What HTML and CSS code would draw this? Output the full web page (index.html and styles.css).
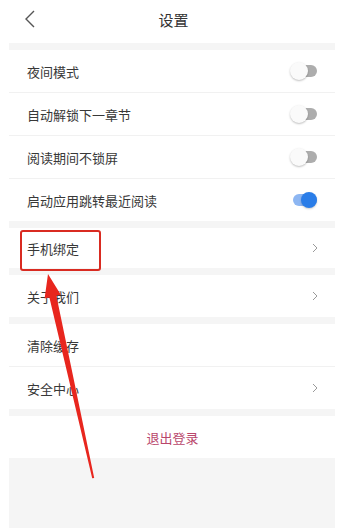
FILE: index.html
```html
<!DOCTYPE html>
<html lang="zh">
<head>
<meta charset="utf-8">
<link rel="stylesheet" href="styles.css">
</head>
<body>
<header class="topbar">
  <span class="back">
    <svg width="12" height="18" viewBox="0 0 12 18"><polyline points="10,1 2,9 10,17" fill="none" stroke="#555" stroke-width="1.4"/></svg>
  </span>
  <h1 class="title">设置</h1>
  <span></span>
</header>
<main class="content">
  <section class="group">
    <div class="row"><span class="label">夜间模式</span><span class="switch"><span class="track"></span><span class="knob"></span></span></div>
    <div class="row"><span class="label">自动解锁下一章节</span><span class="switch"><span class="track"></span><span class="knob"></span></span></div>
    <div class="row"><span class="label">阅读期间不锁屏</span><span class="switch"><span class="track"></span><span class="knob"></span></span></div>
    <div class="row"><span class="label">启动应用跳转最近阅读</span><span class="switch on"><span class="track"></span><span class="knob"></span></span></div>
  </section>
  <section class="group">
    <div class="row short"><span class="label">手机绑定</span><span class="chev"><svg width="6" height="10" viewBox="0 0 6 10"><polyline points="1,1 5,5 1,9" fill="none" stroke="#9a9a9a" stroke-width="1"/></svg></span></div>
  </section>
  <section class="group">
    <div class="row"><span class="label">关于我们</span><span class="chev"><svg width="6" height="10" viewBox="0 0 6 10"><polyline points="1,1 5,5 1,9" fill="none" stroke="#9a9a9a" stroke-width="1"/></svg></span></div>
  </section>
  <section class="group">
    <div class="row"><span class="label">清除缓存</span></div>
    <div class="row"><span class="label">安全中心</span><span class="chev"><svg width="6" height="10" viewBox="0 0 6 10"><polyline points="1,1 5,5 1,9" fill="none" stroke="#9a9a9a" stroke-width="1"/></svg></span></div>
  </section>
  <section class="group">
    <div class="row logout">退出登录</div>
  </section>
</main>
<div class="highlight"></div>
<svg class="arrow" width="347" height="528" viewBox="0 0 347 528">
  <polygon points="48,274 60.8,294.8 56.4,295.8 94.2,478 92.2,478.3 49.4,297.4 44.6,298.4" fill="#e8261e"/>
</svg>
</body>
</html>
```

FILE: styles.css
```css
html, body {
  margin: 0;
  padding: 0;
  background: #ffffff;
}
body {
  position: relative;
  width: 347px;
  height: 528px;
  overflow: hidden;
  font-family: "Noto Sans CJK SC", "Noto Sans", sans-serif;
  color: #333333;
}
.topbar {
  height: 43px;
  display: grid;
  grid-template-columns: 1fr auto 1fr;
  align-items: center;
  background: #ffffff;
}
.back {
  display: flex;
  align-items: center;
  padding-left: 24px;
  padding-bottom: 5px;
}
.title {
  margin: 0;
  font-size: 15px;
  font-weight: 400;
  color: #333333;
  padding-bottom: 5px;
}
.content {
  margin: 0 12px 0 9px;
  background: #f5f5f5;
  padding-top: 7px;
  height: 485px;
  box-sizing: border-box;
  display: flex;
  flex-direction: column;
  gap: 7px;
}
.group {
  background: #ffffff;
}
.row {
  height: 42px;
  display: flex;
  align-items: center;
  justify-content: space-between;
  padding: 0 17px 0 18px;
  font-size: 13px;
  color: #383838;
}
.row + .row {
  border-top: 1px solid #f1f1f1;
}
.row.short {
  height: 40px;
}
.switch {
  position: relative;
  width: 28px;
  height: 18px;
}
.track {
  position: absolute;
  left: 3px;
  top: 3px;
  width: 24px;
  height: 12px;
  border-radius: 6px;
  background: #adadad;
}
.knob {
  position: absolute;
  left: 0;
  top: 0;
  width: 18px;
  height: 18px;
  border-radius: 50%;
  background: #fafafa;
  box-shadow: 0 1px 2px rgba(0,0,0,0.25);
}
.switch.on .track {
  background: #8db6f2;
}
.switch.on .knob {
  left: 11px;
  top: 1px;
  width: 16px;
  height: 16px;
  background: #2a7de8;
  box-shadow: 0 1px 2px rgba(0,0,0,0.2);
}
.chev {
  display: flex;
  align-items: center;
  padding-right: 0;
}
.logout {
  justify-content: center;
  color: #b9466b;
  font-size: 13px;
}
.highlight {
  position: absolute;
  left: 20px;
  top: 230px;
  width: 77px;
  height: 37px;
  border: 2px solid #d92b21;
  border-radius: 3px;
}
.arrow {
  position: absolute;
  left: 0;
  top: 0;
}
```
